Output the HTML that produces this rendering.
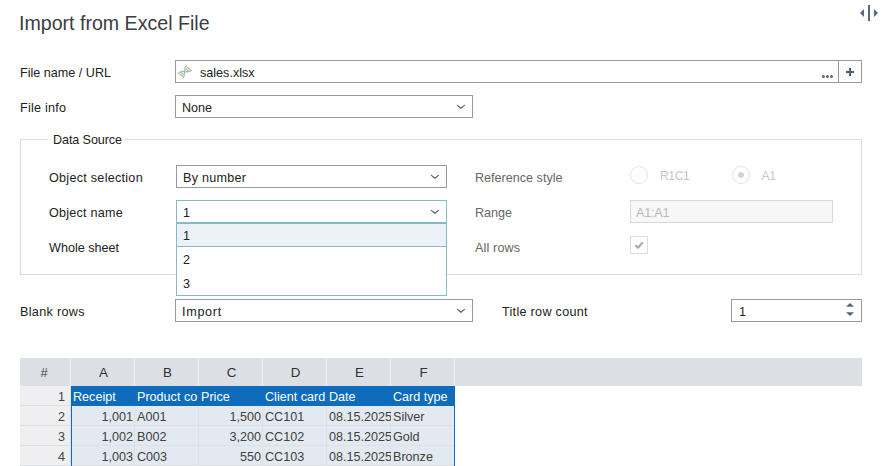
<!DOCTYPE html>
<html><head><meta charset="utf-8">
<style>
html,body{margin:0;padding:0;background:#fff;width:884px;height:466px;overflow:hidden;}
body{position:relative;font-family:"Liberation Sans",sans-serif;color:#222;}
.a{position:absolute;white-space:nowrap;}
.t{font-size:12.6px;line-height:16px;}
.box{position:absolute;box-sizing:border-box;border:1px solid #999;background:#fff;}
.g{font-size:12.6px;line-height:16px;}
.chev{position:absolute;width:9px;height:5px;}
</style></head>
<body>
<!-- title -->
<div class="a" style="left:19px;top:11px;font-size:19.6px;line-height:24px;color:#3c3c44;">Import from Excel File</div>
<!-- top right icon -->
<svg class="a" style="left:856px;top:2px" width="26" height="22" viewBox="0 0 26 22">
  <rect x="12" y="3" width="2" height="16" fill="#59677c"/>
  <path d="M4 11 L8 7 L8 15 Z" fill="#59677c"/>
  <path d="M22 11 L18 7 L18 15 Z" fill="#59677c"/>
</svg>

<!-- File name / URL -->
<div class="a t" style="left:20px;top:65px;">File name / URL</div>
<div class="box" style="left:175px;top:60px;width:664px;height:23px;"></div>
<div class="box" style="left:838px;top:60px;width:24px;height:23px;"></div>
<svg class="a" style="left:176px;top:62px" width="18" height="18" viewBox="0 0 18 18">
  <path d="M10.5 4.6 L14.6 8.1 M10.0 6.9 L12.9 9.4 M3.6 11.7 L7.0 14.9 M5.0 10.3 L7.8 12.8" stroke="#f5a23a" stroke-width="1.05" fill="none"/>
  <path d="M10.4 3.3 C8.6 5.5 8.6 8 8.6 9.6 C8.6 12 8 14.5 7.4 16.4" stroke="#86bdea" stroke-width="1.15" fill="none"/>
  <path d="M2.3 11.4 C4.2 9.6 6.5 9.2 8.6 9.6 C11 10 13.4 10.2 15.6 8.3" stroke="#86bdea" stroke-width="1.15" fill="none"/>
</svg>
<div class="a t" style="left:200px;top:65px;">sales.xlsx</div>
<svg class="a" style="left:820px;top:74px" width="14" height="5" viewBox="0 0 14 5">
  <circle cx="3.4" cy="2.4" r="1.5" fill="#5a6a80"/>
  <circle cx="7.4" cy="2.4" r="1.5" fill="#5a6a80"/>
  <circle cx="11.5" cy="2.4" r="1.5" fill="#5a6a80"/>
</svg>
<svg class="a" style="left:845px;top:67px" width="10" height="10" viewBox="0 0 10 10">
  <rect x="1" y="4" width="8" height="2" fill="#4f5d73"/>
  <rect x="4" y="1" width="2" height="8" fill="#4f5d73"/>
</svg>

<!-- File info -->
<div class="a t" style="left:20px;top:100px;letter-spacing:0.25px;">File info</div>
<div class="box" style="left:175px;top:95px;width:298px;height:23px;"></div>
<div class="a t" style="left:182px;top:100px;">None</div>
<svg class="a" style="left:452px;top:100px" width="18" height="14" viewBox="0 0 18 14"><path d="M5.4 5.4 L8.9 8.3 L12.5 5.4" stroke="#535e72" stroke-width="1.15" stroke-linecap="round" stroke-linejoin="round" fill="none"/></svg>

<!-- Fieldset -->
<div class="a" style="left:20px;top:139px;width:840px;height:134px;border:1px solid #dcdcdc;"></div>
<div class="a t" style="left:48px;top:132px;background:#fff;padding:0 3px 0 5px;letter-spacing:-0.1px;">Data Source</div>

<div class="a t" style="left:49px;top:170px;letter-spacing:0.27px;">Object selection</div>
<div class="box" style="left:176px;top:165px;width:271px;height:23px;"></div>
<div class="a t" style="left:183px;top:170px;letter-spacing:0.25px;">By number</div>
<svg class="a" style="left:426px;top:170px" width="18" height="14" viewBox="0 0 18 14"><path d="M5.4 5.4 L8.9 8.3 L12.5 5.4" stroke="#535e72" stroke-width="1.15" stroke-linecap="round" stroke-linejoin="round" fill="none"/></svg>

<div class="a t" style="left:49px;top:205px;letter-spacing:0.23px;">Object name</div>
<div class="box" style="left:176px;top:200px;width:271px;height:23px;border-color:#86b8c5;"></div>
<div class="a t" style="left:183px;top:205px;">1</div>
<svg class="a" style="left:426px;top:205px" width="18" height="14" viewBox="0 0 18 14"><path d="M5.4 5.4 L8.9 8.3 L12.5 5.4" stroke="#535e72" stroke-width="1.15" stroke-linecap="round" stroke-linejoin="round" fill="none"/></svg>

<div class="a t" style="left:49px;top:240px;letter-spacing:0px;">Whole sheet</div>

<div class="a t" style="left:475px;top:170px;color:#666;">Reference style</div>
<div class="a" style="left:630px;top:166px;width:16px;height:16px;border:1px solid #e3e3e3;border-radius:50%;"></div>
<div class="a t" style="left:660px;top:167.5px;color:#c6c6c6;font-size:12.2px;letter-spacing:-0.45px;">R1C1</div>
<div class="a" style="left:732px;top:166px;width:16px;height:16px;border:1px solid #e3e3e3;border-radius:50%;"></div>
<div class="a" style="left:738px;top:172px;width:6px;height:6px;background:#d3d3d3;border-radius:50%;"></div>
<div class="a t" style="left:761.5px;top:167.5px;color:#c6c6c6;font-size:12.2px;letter-spacing:-0.3px;">A1</div>

<div class="a t" style="left:475px;top:205px;color:#666;">Range</div>
<div class="box" style="left:630px;top:200px;width:203px;height:23px;border-color:#d8d8d8;background:#f7f7f7;"></div>
<div class="a t" style="left:636px;top:205px;color:#b8b8b8;letter-spacing:-0.2px;">A1:A1</div>

<div class="a t" style="left:475px;top:240px;color:#666;letter-spacing:0.15px;">All rows</div>
<div class="box" style="left:630px;top:236px;width:18px;height:18px;border-color:#dcdcdc;"></div>
<svg class="a" style="left:630px;top:236px" width="18" height="18" viewBox="0 0 18 18"><path d="M5.3 9.3 L8.2 11.6 L12.7 6.4" stroke="#a8a8a8" stroke-width="2.2" fill="none"/></svg>

<!-- dropdown -->
<div class="box" style="left:176px;top:222px;width:271px;height:74px;border-color:#86b8c5;border-top-width:2px;"></div>
<div class="a" style="left:177px;top:224px;width:269px;height:22px;background:#ecf1f8;border-bottom:1px solid #8bbac6;"></div>
<div class="a t" style="left:183px;top:228px;">1</div>
<div class="a t" style="left:183px;top:252px;">2</div>
<div class="a t" style="left:183px;top:276px;">3</div>

<!-- Blank rows -->
<div class="a t" style="left:20px;top:304px;letter-spacing:0.33px;">Blank rows</div>
<div class="box" style="left:175px;top:299px;width:298px;height:23px;"></div>
<div class="a t" style="left:182px;top:304px;letter-spacing:0.7px;">Import</div>
<svg class="a" style="left:452px;top:304px" width="18" height="14" viewBox="0 0 18 14"><path d="M5.4 5.4 L8.9 8.3 L12.5 5.4" stroke="#535e72" stroke-width="1.15" stroke-linecap="round" stroke-linejoin="round" fill="none"/></svg>

<div class="a t" style="left:502px;top:304px;letter-spacing:0.3px;">Title row count</div>
<div class="box" style="left:731px;top:299px;width:131px;height:23px;"></div>
<div class="a t" style="left:739px;top:304px;">1</div>
<svg class="a" style="left:845px;top:302px" width="10" height="16" viewBox="0 0 10 16">
  <path d="M1 4.8 L5 1 L9 4.8 Z" fill="#56637a"/>
  <path d="M1 10.2 L5 14 L9 10.2 Z" fill="#56637a"/>
</svg>

<!-- grid -->
<div class="a" style="left:20px;top:358px;width:842px;height:28px;background:#dcdfe4;"></div>
<div class="a" style="left:70px;top:358px;width:1px;height:28px;background:#eef0f2;"></div>
<div class="a" style="left:134px;top:358px;width:1px;height:28px;background:#eef0f2;"></div>
<div class="a" style="left:198px;top:358px;width:1px;height:28px;background:#eef0f2;"></div>
<div class="a" style="left:262px;top:358px;width:1px;height:28px;background:#eef0f2;"></div>
<div class="a" style="left:326px;top:358px;width:1px;height:28px;background:#eef0f2;"></div>
<div class="a" style="left:390px;top:358px;width:1px;height:28px;background:#eef0f2;"></div>
<div class="a" style="left:454px;top:358px;width:1px;height:28px;background:#eef0f2;"></div>
<div class="a g" style="left:19px;top:365px;width:50px;text-align:center;font-size:13px;color:#444;">#</div>
<div class="a g" style="left:72px;top:365px;width:63px;text-align:center;font-size:13.4px;color:#333;">A</div>
<div class="a g" style="left:136px;top:365px;width:63px;text-align:center;font-size:13.4px;color:#333;">B</div>
<div class="a g" style="left:200px;top:365px;width:63px;text-align:center;font-size:13.4px;color:#333;">C</div>
<div class="a g" style="left:264px;top:365px;width:63px;text-align:center;font-size:13.4px;color:#333;">D</div>
<div class="a g" style="left:328px;top:365px;width:63px;text-align:center;font-size:13.4px;color:#333;">E</div>
<div class="a g" style="left:392px;top:365px;width:63px;text-align:center;font-size:13.4px;color:#333;">F</div>
<div class="a" style="left:20px;top:386px;width:50px;height:19px;background:#efeff2;border-bottom:1px solid #dcdfe4;"></div>
<div class="a g" style="left:20px;top:389px;width:45px;text-align:right;color:#444;">1</div>
<div class="a" style="left:20px;top:406px;width:50px;height:19px;background:#efeff2;border-bottom:1px solid #dcdfe4;"></div>
<div class="a g" style="left:20px;top:409px;width:45px;text-align:right;color:#444;">2</div>
<div class="a" style="left:20px;top:426px;width:50px;height:19px;background:#efeff2;border-bottom:1px solid #dcdfe4;"></div>
<div class="a g" style="left:20px;top:429px;width:45px;text-align:right;color:#444;">3</div>
<div class="a" style="left:20px;top:446px;width:50px;height:19px;background:#efeff2;border-bottom:1px solid #dcdfe4;"></div>
<div class="a g" style="left:20px;top:449px;width:45px;text-align:right;color:#444;">4</div>
<div class="a" style="left:70px;top:386px;width:1px;height:80px;background:#dcdfe4;"></div>
<div class="a" style="left:71px;top:406px;width:384px;height:60px;background:#e3e9f0;"></div>
<div class="a" style="left:71px;top:425px;width:384px;height:1px;background:#dde0e5;"></div>
<div class="a" style="left:71px;top:445px;width:384px;height:1px;background:#dde0e5;"></div>
<div class="a" style="left:71px;top:465px;width:384px;height:1px;background:#dde0e5;"></div>
<div class="a" style="left:134px;top:406px;width:1px;height:60px;background:#dde0e5;"></div>
<div class="a" style="left:198px;top:406px;width:1px;height:60px;background:#dde0e5;"></div>
<div class="a" style="left:262px;top:406px;width:1px;height:60px;background:#dde0e5;"></div>
<div class="a" style="left:326px;top:406px;width:1px;height:60px;background:#dde0e5;"></div>
<div class="a" style="left:390px;top:406px;width:1px;height:60px;background:#dde0e5;"></div>
<div class="a" style="left:71px;top:386px;width:384px;height:20px;background:#0f6cbd;"></div>
<div class="a" style="left:71px;top:386px;width:1px;height:80px;background:#0f6cbd;"></div>
<div class="a" style="left:454px;top:386px;width:1px;height:80px;background:#0f6cbd;"></div>
<div class="a g" style="left:73px;top:389px;width:62px;color:#fff;overflow:hidden;">Receipt</div>
<div class="a g" style="left:137px;top:389px;width:62px;color:#fff;overflow:hidden;">Product co</div>
<div class="a g" style="left:201px;top:389px;width:62px;color:#fff;overflow:hidden;">Price</div>
<div class="a g" style="left:265px;top:389px;width:62px;color:#fff;overflow:hidden;">Client card</div>
<div class="a g" style="left:329px;top:389px;width:62px;color:#fff;overflow:hidden;">Date</div>
<div class="a g" style="left:393px;top:389px;width:62px;color:#fff;overflow:hidden;">Card type</div>
<div class="a g" style="left:71px;top:409px;width:62px;text-align:right;color:#404040;overflow:hidden;">1,001</div>
<div class="a g" style="left:137px;top:409px;width:62px;color:#404040;overflow:hidden;">A001</div>
<div class="a g" style="left:199px;top:409px;width:62px;text-align:right;color:#404040;overflow:hidden;">1,500</div>
<div class="a g" style="left:265px;top:409px;width:62px;color:#404040;overflow:hidden;">CC101</div>
<div class="a g" style="left:329px;top:409px;width:62px;color:#404040;overflow:hidden;">08.15.2025</div>
<div class="a g" style="left:393px;top:409px;width:62px;color:#404040;overflow:hidden;">Silver</div>
<div class="a g" style="left:71px;top:429px;width:62px;text-align:right;color:#404040;overflow:hidden;">1,002</div>
<div class="a g" style="left:137px;top:429px;width:62px;color:#404040;overflow:hidden;">B002</div>
<div class="a g" style="left:199px;top:429px;width:62px;text-align:right;color:#404040;overflow:hidden;">3,200</div>
<div class="a g" style="left:265px;top:429px;width:62px;color:#404040;overflow:hidden;">CC102</div>
<div class="a g" style="left:329px;top:429px;width:62px;color:#404040;overflow:hidden;">08.15.2025</div>
<div class="a g" style="left:393px;top:429px;width:62px;color:#404040;overflow:hidden;">Gold</div>
<div class="a g" style="left:71px;top:449px;width:62px;text-align:right;color:#404040;overflow:hidden;">1,003</div>
<div class="a g" style="left:137px;top:449px;width:62px;color:#404040;overflow:hidden;">C003</div>
<div class="a g" style="left:199px;top:449px;width:62px;text-align:right;color:#404040;overflow:hidden;">550</div>
<div class="a g" style="left:265px;top:449px;width:62px;color:#404040;overflow:hidden;">CC103</div>
<div class="a g" style="left:329px;top:449px;width:62px;color:#404040;overflow:hidden;">08.15.2025</div>
<div class="a g" style="left:393px;top:449px;width:62px;color:#404040;overflow:hidden;">Bronze</div>
</body></html>
